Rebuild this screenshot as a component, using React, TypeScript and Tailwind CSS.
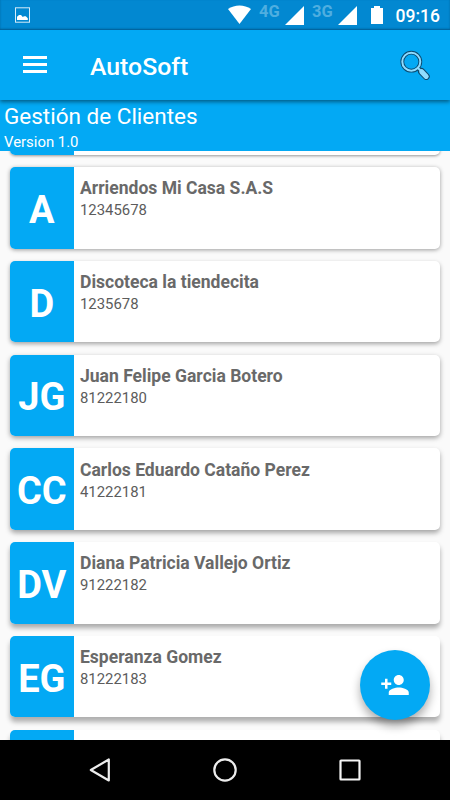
interface Client {
  initials: string;
  name: string;
  document: string;
  shadow: string;
}

const clients: Client[] = [
  {
    initials: "",
    name: "",
    document: "",
    shadow: "shadow-[0_1px_3px_rgba(0,0,0,0.4)]",
  },
  {
    initials: "A",
    name: "Arriendos Mi Casa S.A.S",
    document: "12345678",
    shadow: "shadow-[0_1px_4px_rgba(0,0,0,0.38)]",
  },
  {
    initials: "D",
    name: "Discoteca la tiendecita",
    document: "1235678",
    shadow: "shadow-[0_2px_4px_rgba(0,0,0,0.34)]",
  },
  {
    initials: "JG",
    name: "Juan Felipe Garcia Botero",
    document: "81222180",
    shadow: "shadow-[0_2px_5px_rgba(0,0,0,0.36)]",
  },
  {
    initials: "CC",
    name: "Carlos Eduardo Cataño Perez",
    document: "41222181",
    shadow: "shadow-[0_3px_5px_rgba(0,0,0,0.34)]",
  },
  {
    initials: "DV",
    name: "Diana Patricia Vallejo Ortiz",
    document: "91222182",
    shadow: "shadow-[0_4px_5px_rgba(0,0,0,0.32)]",
  },
  {
    initials: "EG",
    name: "Esperanza Gomez",
    document: "81222183",
    shadow: "shadow-[0_5px_5px_rgba(0,0,0,0.3)]",
  },
  {
    initials: "",
    name: "",
    document: "",
    shadow: "shadow-[0_5px_5px_rgba(0,0,0,0.3)]",
  },
];

function SignalIcon() {
  return (
    <svg className="mt-[6px] h-[19px] w-[19px]" viewBox="0 0 19 19" fill="white">
      <path d="M19 0v19H0z" />
    </svg>
  );
}

function StatusBar() {
  return (
    <div className="flex h-[30px] items-start bg-[#0288d1] pl-[15px] shadow-[inset_0_-1px_2px_rgba(0,50,90,0.45)]">
      <svg className="mt-[7px] h-[16px] w-[15px]" viewBox="0 0 15 16" fill="none">
        <rect x="0.5" y="0.8" width="14" height="14.4" stroke="#d6ecf8" strokeWidth="1" />
        <path d="M2 13v-3.200l2-1.800h2l1.800 2 1.200-.8h1.800l2 2V13z" fill="white" />
      </svg>
      <svg className="mt-[5px] ml-[198px] h-[19px] w-[23px]" viewBox="0 0 23 19" fill="white">
        <path d="M0 3.900C6.500-.8 16.500-.8 23 3.900L11.500 19z" />
      </svg>
      <span className="ml-[8px] mt-[3px] w-[26px] text-[16.500px] leading-[17px] font-bold text-[#4faee0]">
        4G
      </span>
      <SignalIcon />
      <span className="ml-[8px] mt-[3px] w-[26px] text-[16.500px] leading-[17px] font-bold text-[#4faee0]">
        3G
      </span>
      <SignalIcon />
      <svg className="mt-[6px] ml-[14px] h-[18px] w-[12px]" viewBox="0 0 12 18" fill="white">
        <path d="M3 0h6v2h3v16H0V2h3z" />
      </svg>
      <span className="ml-[12.500px] mt-[6px] text-[17.500px] leading-[21px] font-medium text-white">
        09:16
      </span>
    </div>
  );
}

function Toolbar() {
  return (
    <header className="relative z-10 flex h-[70px] items-center bg-[#03a9f4] pl-[23px] shadow-[0_2px_4px_rgba(0,0,0,0.45)]">
      <button className="-mt-[1px] flex h-[17px] w-[24px] flex-col justify-between" aria-label="Menu">
        <span className="h-[3px] w-full bg-white" />
        <span className="h-[3px] w-full bg-white" />
        <span className="h-[3px] w-full bg-white" />
      </button>
      <h1 className="ml-[43px] pt-[4px] text-[24.800px] leading-[30px] font-medium text-white">
        AutoSoft
      </h1>
      <button className="mr-[20px] ml-auto" aria-label="Buscar">
        <svg className="h-[30px] w-[30px]" viewBox="0 0 30 30" fill="none">
          <path d="M17.500 17.500l3.500 3.500" stroke="#0b4a70" strokeWidth="4" />
          <path d="M21.500 21.500l4.700 4.900" stroke="#0b4a70" strokeWidth="7" strokeLinecap="round" />
          <circle cx="11.300" cy="11.700" r="9" stroke="#0b4a70" strokeWidth="3.800" />
          <circle cx="11.300" cy="11.700" r="9" stroke="#8fdcff" strokeWidth="2" />
          <path d="M18 18l3 3" stroke="#8fdcff" strokeWidth="2" />
          <path d="M21.700 21.700l4.500 4.700" stroke="#8fdcff" strokeWidth="5" strokeLinecap="round" />
        </svg>
      </button>
    </header>
  );
}

function ClientCard({ client }: { client: Client }) {
  return (
    <li
      className={`flex h-[81.500px] shrink-0 overflow-hidden rounded-[5px] bg-white ${client.shadow}`}
    >
      <div className="flex w-[63.700px] shrink-0 items-center justify-center bg-[#03a9f4] pt-[5px] text-[38px] font-bold text-white">
        {client.initials}
      </div>
      <div className="pt-[11.300px] pl-[6.300px]">
        <p className="text-[17.550px] leading-[21px] font-bold text-[#696969]">{client.name}</p>
        <p className="mt-[1px] text-[14.900px] leading-[20px] text-[#5c5c5c]">{client.document}</p>
      </div>
    </li>
  );
}

function NavigationBar() {
  return (
    <nav className="flex h-[60px] items-center justify-between bg-black px-[87px]">
      <svg className="h-[26px] w-[26px]" viewBox="0 0 26 26" fill="none">
        <path
          d="M21.800 2.500v21L3.800 13z"
          stroke="#ededed"
          strokeWidth="2.200"
          strokeLinejoin="round"
        />
      </svg>
      <svg className="h-[26px] w-[26px]" viewBox="0 0 26 26" fill="none">
        <circle cx="13" cy="13" r="10.700" stroke="#ededed" strokeWidth="2.200" />
      </svg>
      <svg className="h-[26px] w-[26px]" viewBox="0 0 26 26" fill="none">
        <rect x="3.500" y="3.500" width="19" height="19" rx="0.500" stroke="#f5f5f5" strokeWidth="2.200" />
      </svg>
    </nav>
  );
}

export default function App() {
  return (
    <div className="relative flex h-[800px] w-[450px] flex-col overflow-hidden bg-[#fafafa] font-[Roboto,sans-serif]">
      <StatusBar />
      <Toolbar />
      <section className="h-[51px] bg-[#03a9f4] pt-[2px] pl-[4px] text-white">
        <h2 className="text-[22.500px] leading-[28px]">Gestión de Clientes</h2>
        <p className="mt-[2px] text-[14.900px] leading-[20px]">Version 1.0</p>
      </section>
      <main className="min-h-0 flex-1 overflow-hidden">
        <ul className="-mt-[77.750px] flex flex-col gap-[12.250px] px-[10px]">
          {clients.map((client, index) => (
            <ClientCard key={index} client={client} />
          ))}
        </ul>
      </main>
      <NavigationBar />

      <button
        className="absolute right-[20px] bottom-[80px] flex h-[70px] w-[70px] items-center justify-center rounded-full bg-[#03a9f4] shadow-[0_6px_10px_rgba(0,0,0,0.32)]"
        aria-label="Agregar cliente"
      >
        <svg className="h-[30px] w-[30px]" viewBox="0 0 24 24" fill="white">
          <path d="M15 12c2.210 0 4-1.790 4-4s-1.790-4-4-4-4 1.790-4 4 1.790 4 4 4zm-9-2V7H4v3H1v2h3v3h2v-3h3v-2H6zm9 4c-2.670 0-8 1.340-8 4v2h16v-2c0-2.660-5.330-4-8-4z" />
        </svg>
      </button>
    </div>
  );
}
